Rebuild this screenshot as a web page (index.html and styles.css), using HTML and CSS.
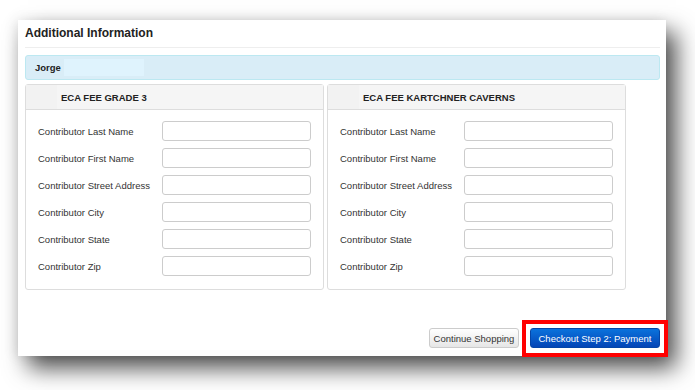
FILE: index.html
```html
<!DOCTYPE html>
<html>
    <head>
        <meta name='viewport' content='width=device-width, initial-scale=1.0'>
        <title>Additional Information</title>
        <link rel="stylesheet" href="styles.css">
    </head>
    <body>
        <div class='page'>
            <div class='card'>
                <header class='title'>Additional Information</header>
                <div class='student'>
                    <span class='name'>Jorge</span>
                    <span class='hidden-name'></span>
                </div>
                <div class='panels'>
                    <fieldset class='panel'>
                        <div class='panel-head'><span class='blur'></span>ECA FEE GRADE 3</div>
                        <div class='panel-body'>
                            <div class='row'><label>Contributor Last Name</label><input type='text'></div>
                            <div class='row'><label>Contributor First Name</label><input type='text'></div>
                            <div class='row'><label>Contributor Street Address</label><input type='text'></div>
                            <div class='row'><label>Contributor City</label><input type='text'></div>
                            <div class='row'><label>Contributor State</label><input type='text'></div>
                            <div class='row'><label>Contributor Zip</label><input type='text'></div>
                        </div>
                    </fieldset>
                    <fieldset class='panel'>
                        <div class='panel-head'><span class='blur'></span>ECA FEE KARTCHNER CAVERNS</div>
                        <div class='panel-body'>
                            <div class='row'><label>Contributor Last Name</label><input type='text'></div>
                            <div class='row'><label>Contributor First Name</label><input type='text'></div>
                            <div class='row'><label>Contributor Street Address</label><input type='text'></div>
                            <div class='row'><label>Contributor City</label><input type='text'></div>
                            <div class='row'><label>Contributor State</label><input type='text'></div>
                            <div class='row'><label>Contributor Zip</label><input type='text'></div>
                        </div>
                    </fieldset>
                </div>
                <div class='actions'>
                    <button class='btn-default'>Continue Shopping</button>
                    <span class='highlight'>
                        <button class='btn-primary'>Checkout Step 2: Payment</button>
                    </span>
                </div>
            </div>
        </div>
    </body>
</html>
```

FILE: styles.css
```css
body {
    margin: 0;
    background-color: #fff;
    font-family: "Liberation Sans", Arial, sans-serif;
}
.page {
    height: 390px;
    box-sizing: border-box;
    padding: 20px 0 0 18px;
    overflow: hidden;
}
.card {
    width: 648px;
    height: 336px;
    box-sizing: border-box;
    padding: 6px 6px 0 7px;
    background-color: #fff;
    box-shadow: 10px 12px 22px rgba(0, 0, 0, 0.7), -3px 0 12px rgba(0, 0, 0, 0.08);
    display: flex;
    flex-direction: column;
}
.title {
    font-size: 12px;
    font-weight: bold;
    color: #222;
    line-height: 14px;
    padding-bottom: 7px;
    border-bottom: 1px solid #eee;
    margin-bottom: 7px;
}
.student {
    height: 25px;
    box-sizing: border-box;
    background-color: #d9edf7;
    border: 1px solid #bce8f1;
    border-radius: 3px;
    display: flex;
    align-items: center;
    padding-left: 9px;
}
.name {
    font-size: 9.5px;
    font-weight: bold;
    color: #222;
}
.hidden-name {
    width: 80px;
    height: 17px;
    margin-left: 3px;
    background-color: #dff3fd;
}
.panels {
    display: flex;
    gap: 3px;
    margin-top: 4px;
}
.panel {
    width: 299px;
    height: 206px;
    box-sizing: border-box;
    margin: 0;
    padding: 0;
    border: 1px solid #ddd;
    border-radius: 3px;
}
.panel-head {
    height: 24px;
    background-color: #f5f5f5;
    border-bottom: 1px solid #ddd;
    font-size: 9.5px;
    font-weight: bold;
    color: #222;
    display: flex;
    align-items: center;
}
.blur {
    width: 31px;
    height: 24px;
    background-color: #f2f2f2;
    margin-right: 4px;
}
.panel-body {
    padding: 11px 12px 0 12px;
    display: flex;
    flex-direction: column;
    gap: 7px;
}
.row {
    display: flex;
    align-items: center;
}
label {
    width: 124px;
    font-size: 9.5px;
    color: #333;
}
input {
    width: 149px;
    height: 20px;
    box-sizing: border-box;
    border: 1px solid #ccc;
    border-radius: 3px;
    margin: 0;
}
.actions {
    margin-top: auto;
    margin-bottom: 8px;
    display: flex;
    justify-content: flex-end;
    gap: 11px;
}
button {
    height: 20px;
    font-family: "Liberation Sans", Arial, sans-serif;
    font-size: 9.5px;
    border-radius: 3px;
    padding: 0;
    display: block;
}
.btn-default {
    width: 90px;
    color: #333;
    background: linear-gradient(#fff, #e6e6e6);
    border: 1px solid #ccc;
}
.highlight {
    position: relative;
}
.highlight::after {
    content: '';
    position: absolute;
    left: -8px;
    top: -8px;
    right: -8px;
    bottom: -9px;
    border: 4px solid #f00;
}
.btn-primary {
    width: 130px;
    color: #fff;
    background: linear-gradient(#0a72dc, #0445b6);
    border: 1px solid #0446a8;
}
```
